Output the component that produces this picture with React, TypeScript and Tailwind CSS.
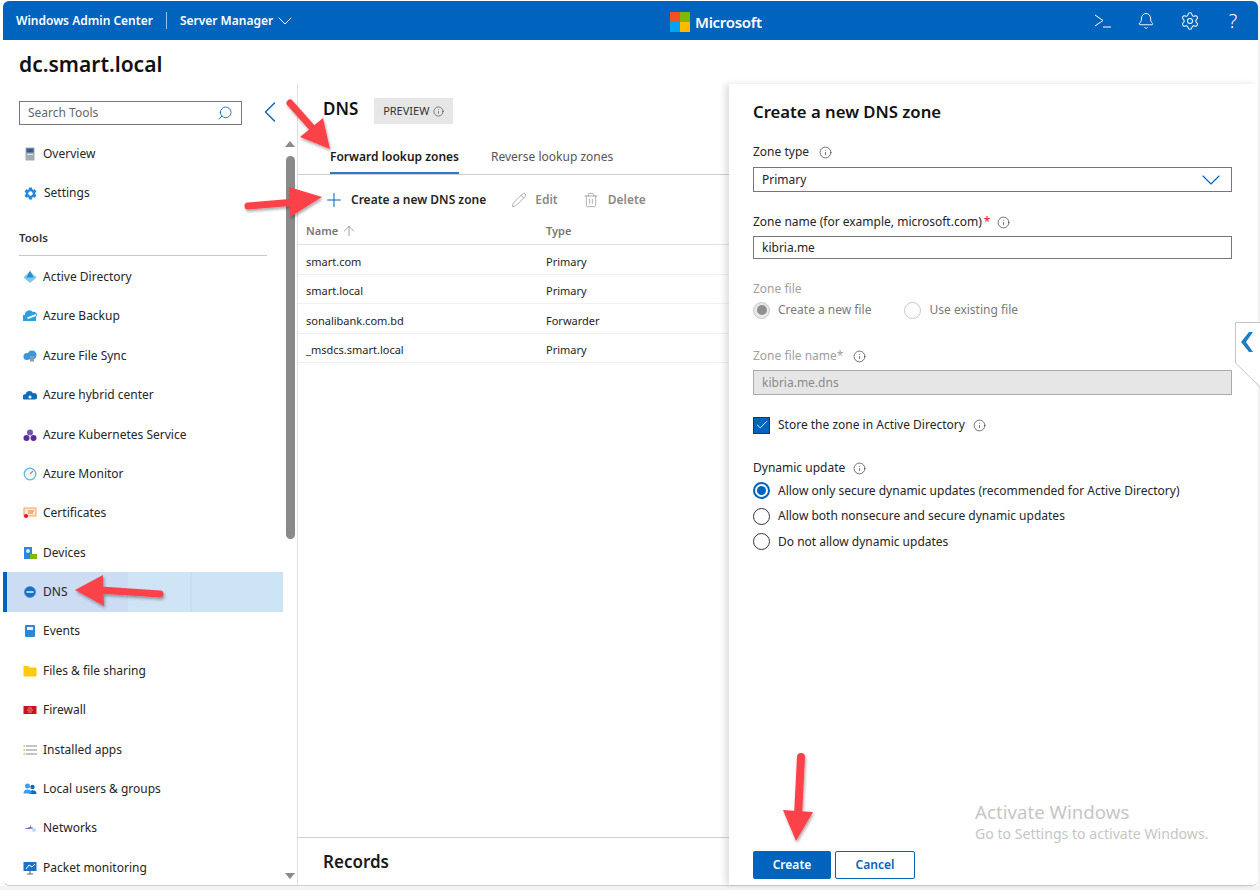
import { Bell, ChevronDown, ChevronLeft, Info, Pencil, Plus, Search, Settings, Trash2, ArrowUp, Check } from "lucide-react";
import { MdSettings } from "react-icons/md";

const font = "font-['Noto_Sans',sans-serif]";

function NavIcon({ name }: { name: string }) {
  switch (name) {
    case "Overview":
      return (
        <svg viewBox="0 0 14 14" className="w-3.5 h-3.5">
          <rect x="2.5" y="0.5" width="9" height="13" fill="#a3abb3" />
          <rect x="3.5" y="1.5" width="7" height="4" fill="#2f5f8f" />
          <rect x="4" y="7" width="6" height="1" fill="#e4e4e4" />
        </svg>
      );
    case "Settings":
      return <MdSettings size={15} className="text-[#1e88e5]" />;
    case "Active Directory":
      return (
        <svg viewBox="0 0 14 14" className="w-3.5 h-3.5">
          <path d="M7 1L0.5 7.5 7 13l6.5-5.5z" fill="#7cc7ea" />
          <path d="M7 1L3.5 7.5h7z" fill="#2b88d8" />
        </svg>
      );
    case "Azure Backup":
      return (
        <svg viewBox="0 0 14 14" className="w-3.5 h-3.5">
          <path d="M1 12a3 3 0 0 1 1-6 4.5 4.5 0 0 1 8-3 3 3 0 0 1 3 5v4z" fill="#2b9fe0" />
          <path d="M4 8.5l9-3.5v2l-8 3z" fill="#fff" />
        </svg>
      );
    case "Azure File Sync":
      return (
        <svg viewBox="0 0 14 14" className="w-3.5 h-3.5">
          <circle cx="4" cy="7.5" r="3.5" fill="#3a96dd" />
          <circle cx="9" cy="6" r="4.5" fill="#3a96dd" />
          <rect x="7" y="7" width="4" height="5.5" fill="#8a9aa8" />
        </svg>
      );
    case "Azure hybrid center":
      return (
        <svg viewBox="0 0 14 14" className="w-3.5 h-3.5">
          <path d="M1 11.5a2.8 2.8 0 0 1 1.5-5.3 4 4 0 0 1 7.5-1 3.2 3.2 0 0 1 2 6.3z" fill="#0f6cbd" />
          <circle cx="7" cy="9" r="1.5" fill="#fff" />
        </svg>
      );
    case "Azure Kubernetes Service":
      return (
        <svg viewBox="0 0 14 14" className="w-3.5 h-3.5">
          <circle cx="7" cy="4.5" r="3" fill="#7b4fb5" />
          <circle cx="3.5" cy="10" r="3" fill="#5c2d91" />
          <circle cx="10.5" cy="10" r="3" fill="#5c2d91" />
        </svg>
      );
    case "Azure Monitor":
      return (
        <svg viewBox="0 0 14 14" className="w-3.5 h-3.5">
          <circle cx="7" cy="7" r="5.8" fill="#eef7fc" stroke="#59b4d9" strokeWidth="1.2" />
          <path d="M7 7l3-3" stroke="#e8704a" strokeWidth="1.2" />
        </svg>
      );
    case "Certificates":
      return (
        <svg viewBox="0 0 14 14" className="w-3.5 h-3.5">
          <rect x="1" y="2" width="12" height="8" fill="#fde9d4" stroke="#f2a35e" />
          <path d="M5 5h6M5 7h5" stroke="#e8704a" />
          <circle cx="3" cy="10" r="2" fill="#e81123" />
        </svg>
      );
    case "Devices":
      return (
        <svg viewBox="0 0 14 14" className="w-3.5 h-3.5">
          <rect x="1" y="1" width="8" height="12" fill="#2b88d8" />
          <circle cx="5" cy="5" r="2" fill="#cfe8fa" />
          <rect x="7" y="8" width="7" height="5" fill="#7fba00" />
        </svg>
      );
    case "DNS":
      return (
        <svg viewBox="0 0 14 14" className="w-3.5 h-3.5">
          <circle cx="7" cy="7" r="5.8" fill="#1a73c7" />
          <rect x="3.5" y="6" width="7" height="2" fill="#a9d3f2" />
        </svg>
      );
    case "Events":
      return (
        <svg viewBox="0 0 14 14" className="w-3.5 h-3.5">
          <rect x="2" y="1" width="10" height="12" rx="1" fill="#2b88d8" />
          <rect x="4" y="3" width="6" height="3" fill="#e6f3fc" />
        </svg>
      );
    case "Files & file sharing":
      return (
        <svg viewBox="0 0 14 14" className="w-3.5 h-3.5">
          <path d="M0.5 2h5l1 1.5h7v9h-13z" fill="#ffc90e" />
        </svg>
      );
    case "Firewall":
      return (
        <svg viewBox="0 0 14 14" className="w-3.5 h-3.5">
          <rect x="0.5" y="3" width="13" height="8" fill="#c4161c" />
          <path d="M5 5h4M4 7h6M5 9h4" stroke="#e98a8d" />
        </svg>
      );
    case "Installed apps":
      return (
        <svg viewBox="0 0 14 14" className="w-3.5 h-3.5">
          <path d="M3 3h11M3 7h11M3 11h11" stroke="#8a8a8a" />
          <path d="M0.5 3h1.5M0.5 7h1.5M0.5 11h1.5" stroke="#7fba00" />
        </svg>
      );
    case "Local users & groups":
      return (
        <svg viewBox="0 0 14 14" className="w-3.5 h-3.5">
          <circle cx="9.5" cy="5" r="2.2" fill="#0f6cbd" />
          <path d="M6 12a3.5 3.5 0 0 1 7.5 0z" fill="#0f6cbd" />
          <circle cx="4.5" cy="4" r="2.5" fill="#3aa0e8" />
          <path d="M0.5 11.5a4 4 0 0 1 8 0z" fill="#3aa0e8" />
        </svg>
      );
    case "Networks":
      return (
        <svg viewBox="0 0 14 14" className="w-3.5 h-3.5">
          <path d="M1 8l6-2V3l1 3 3 1-4 1z" fill="#8661c5" />
          <circle cx="11" cy="9" r="2" fill="#b9d9f5" />
        </svg>
      );
    default:
      return (
        <svg viewBox="0 0 14 14" className="w-3.5 h-3.5">
          <rect x="0.5" y="1" width="13" height="9" fill="#1a73c7" />
          <path d="M3 8l3-4 3 2 3-3" stroke="#fff" fill="none" />
          <path d="M4 13h6M7 10v3" stroke="#5a6a7a" strokeWidth="1.2" />
        </svg>
      );
  }
}

function NavRow({ label, active }: { label: string; active?: boolean }) {
  return (
    <div
      className={`h-[39.4px] flex items-center gap-[6px] text-[12px] text-[#252525] ${
        active
          ? "border-l-4 border-[#0063bd] pl-[16px] bg-[linear-gradient(90deg,#cbdcf3_121px,#cfe4f4_121px,#cfe4f4_183px,#c6dff3_183px,#c6dff3_185px,#cde4f5_185px)]"
          : "pl-[20px]"
      }`}
    >
      <NavIcon name={label} />
      <span>{label}</span>
    </div>
  );
}

function Tip({ size = 13 }: { size?: number }) {
  return <Info size={size} strokeWidth={1.25} className="text-[#333] shrink-0" />;
}

function RadioDot({ checked, disabled }: { checked?: boolean; disabled?: boolean }) {
  if (disabled) {
    return (
      <span className={`w-[17px] h-[17px] rounded-full border border-[#c8c8c8] flex items-center justify-center ${checked ? "bg-[#e8e8e8]" : "bg-white"}`}>
        {checked && <span className="w-[10px] h-[10px] rounded-full bg-[#8f8f8f]" />}
      </span>
    );
  }
  return (
    <span className={`w-[17px] h-[17px] rounded-full flex items-center justify-center ${checked ? "border-2 border-[#0063bd]" : "border-[1.5px] border-[#333]"}`}>
      {checked && <span className="w-[9px] h-[9px] rounded-full bg-[#0063bd]" />}
    </span>
  );
}

const upperNav = ["Overview", "Settings"];
const toolNav = [
  "Active Directory",
  "Azure Backup",
  "Azure File Sync",
  "Azure hybrid center",
  "Azure Kubernetes Service",
  "Azure Monitor",
  "Certificates",
  "Devices",
  "DNS",
  "Events",
  "Files & file sharing",
  "Firewall",
  "Installed apps",
  "Local users & groups",
  "Networks",
  "Packet monitoring",
];

const zones = [
  ["smart.com", "Primary"],
  ["smart.local", "Primary"],
  ["sonalibank.com.bd", "Forwarder"],
  ["_msdcs.smart.local", "Primary"],
];

export default function App() {
  return (
    <div className={`${font} relative w-[1260px] h-[890px] bg-[#f3f3f3] overflow-hidden pb-1 pr-[2px]`}>
      <div className="h-full flex flex-col bg-white pl-[3px] pt-px">
        {/* header */}
        <div className="h-[39px] shrink-0 bg-[#0063bd] rounded-t-[6px] text-white flex items-center pl-[13px] relative">
          <span className="text-[12px] font-semibold">Windows Admin Center</span>
          <span className="w-px h-[17px] bg-[#9cc3e6] ml-[13px] mr-[13px]" />
          <span className="text-[12px] font-semibold">Server Manager</span>
          <ChevronDown size={24} strokeWidth={1} />
          <div className="flex-1" />
          <div className="flex items-center gap-[23.5px] pr-[15px]">
            <svg viewBox="0 0 18 18" className="w-5 h-[18px]" fill="none" stroke="white" strokeWidth="1">
              <path d="M1 3l8 5.5-8 5.5M9 15h8" />
            </svg>
            <span className="w-5 flex justify-center"><Bell size={18} strokeWidth={1.25} /></span>
            <Settings size={20} strokeWidth={1.25} />
            <span className="text-[20px] font-light leading-none w-5 text-center">?</span>
          </div>
          <div className="absolute left-[667px] top-[10px] flex items-center gap-[5px]">
            <div className="grid grid-cols-2 gap-0 w-[20px] h-[20px]">
              <span className="bg-[#f25022]" />
              <span className="bg-[#7fba00]" />
              <span className="bg-[#00a4ef]" />
              <span className="bg-[#ffb900]" />
            </div>
            <span className="text-[15px] font-semibold tracking-[-0.3px]">Microsoft</span>
          </div>
        </div>

        {/* server name */}
        <div className="h-[44px] shrink-0 flex items-center pl-[16px] pt-[5px] text-[21px] font-semibold text-[#111]">
          dc.smart.local
        </div>

        <div className="flex-1 flex min-h-0 border-b border-[#cfcfcf] rounded-b-[6px]">
          {/* sidebar */}
          <div className="w-[295px] shrink-0 flex flex-col border-r border-[#dedede]">
            <div className="h-[50px] shrink-0 flex items-start pt-[17px] pl-[16px]">
              <div className="w-[223px] h-[24px] border border-[#777] flex items-center justify-between px-2 text-[12px] text-[#666]">
                <span>Search Tools</span>
                <Search size={16} strokeWidth={1.25} className="text-[#0063bd] -scale-x-100" />
              </div>
              <ChevronLeft size={36} strokeWidth={0.9} className="text-[#0063bd] ml-[10px] mt-[-7px]" />
            </div>
            <div className="flex-1 flex min-h-0">
              <div className="w-[280px] shrink-0 overflow-hidden">
                {upperNav.map((label) => (
                  <NavRow key={label} label={label} />
                ))}
                <div className="mx-[16px] mt-[10px] h-[33px] border-b border-[#c8c8c8] flex items-start pt-[6px] text-[11.5px] font-semibold text-[#333]">
                  Tools
                </div>
                <div className="h-[1.5px]" />
                {toolNav.map((label) => (
                  <NavRow key={label} label={label} active={label === "DNS"} />
                ))}
              </div>
              <div className="flex-1 flex flex-col items-center pt-[7px]">
                <span className="w-0 h-0 border-x-[5px] border-x-transparent border-b-[6px] border-b-[#8a8a8a]" />
                <span className="w-[9px] h-[383px] rounded-full bg-[#8a8a8a] mt-[9px]" />
                <div className="flex-1" />
                <span className="w-0 h-0 border-x-[5px] border-x-transparent border-t-[6px] border-t-[#8a8a8a] mb-[6px]" />
              </div>
            </div>
          </div>

          {/* DNS list */}
          <div className="flex-1 min-w-0 flex flex-col text-[#252525]">
            <div className="h-[53px] shrink-0 flex items-start pl-[25px] pt-[12px]">
              <span className="text-[17px] font-semibold leading-[26px] text-[#111]">DNS</span>
              <span className="ml-[16px] mt-[2px] h-[26px] w-[79px] bg-[#e6e6e6] flex items-center justify-center gap-1 text-[11px] text-[#333]">
                PREVIEW <Info size={11} strokeWidth={1.25} />
              </span>
            </div>
            <div className="h-[38px] shrink-0 flex items-start gap-[32px] pl-[32px] border-b border-[#d0d0d0] text-[12px] pt-[11px]">
              <span className="font-semibold text-[#1a1a1a] h-[26px] border-b-2 border-[#2b7cc5]">Forward lookup zones</span>
              <span className="text-[#555]">Reverse lookup zones</span>
            </div>
            <div className="h-[47px] shrink-0 flex items-center pl-[25px] pt-[2px] text-[12px]">
              <Plus size={22} strokeWidth={1.1} className="text-[#0063bd] mr-[6px]" />
              <span className="font-semibold text-[#252525] mr-[25px]">Create a new DNS zone</span>
              <Pencil size={16} strokeWidth={1} className="text-[#8a8a8a] mr-[8px]" />
              <span className="text-[#8a8a8a] font-semibold mr-[25px]">Edit</span>
              <Trash2 size={16} strokeWidth={1} className="text-[#8a8a8a] mr-[9px]" />
              <span className="text-[#8a8a8a] font-semibold">Delete</span>
            </div>
            <div className="h-[23px] shrink-0 grid grid-cols-[240px_1fr] pl-[8px] pt-[1px] items-start border-b border-[#e3e3e3] text-[11px] font-semibold text-[#777]">
              <span className="flex items-center gap-[3px]">
                Name <ArrowUp size={16} strokeWidth={1} />
              </span>
              <span>Type</span>
            </div>
            {zones.map(([name, type]) => (
              <div key={name} className="h-[29.6px] shrink-0 grid grid-cols-[240px_1fr] pl-[8px] pt-[5px] items-center border-b border-[#f0f0f0] text-[11px]">
                <span>{name}</span>
                <span>{type}</span>
              </div>
            ))}
            <div className="flex-1" />
            <div className="h-[48px] shrink-0 border-t border-[#d0d0d0] pl-[25px] flex items-center text-[17px] font-semibold text-[#1a1a1a]">
              Records
            </div>
          </div>

          {/* create panel */}
          <div className="w-[529px] shrink-0 flex flex-col pl-[24px] pr-[26px] text-[12px] text-[#252525] shadow-[-4px_0_6px_rgba(0,0,0,0.12)] bg-white rounded-br-[6px] relative">
            <div className="text-[16.7px] font-semibold text-[#111] mt-[16px] h-[24px] leading-[24px]">Create a new DNS zone</div>

            <div className="flex items-center gap-[10px] mt-[18px] h-[20px]">
              Zone type <Tip />
            </div>
            <div className="mt-[5px] h-[25px] border border-[#777] flex items-center justify-between pl-2 pr-[4px]">
              <span>Primary</span>
              <ChevronDown size={32} strokeWidth={0.8} className="text-[#0063bd] -my-2" />
            </div>

            <div className="flex items-center mt-[20px] h-[20px]">
              Zone name (for example, microsoft.com)
              <span className="text-[#e81123] ml-[2px]">*</span>
              <span className="ml-[7px]"><Tip /></span>
            </div>
            <div className="mt-[4px] h-[23px] border border-[#777] flex items-center pl-2">kibria.me</div>

            <div className="text-[#a0a0a0] mt-[21px] h-[18px] flex items-center">Zone file</div>
            <div className="flex items-center text-[#7a7a7a] h-[24px]">
              <RadioDot checked disabled />
              <span className="ml-2">Create a new file</span>
              <span className="ml-[33px]"><RadioDot disabled /></span>
              <span className="ml-2">Use existing file</span>
            </div>

            <div className="text-[#a0a0a0] mt-[24px] h-[20px] flex items-center gap-[10px]">
              <span>Zone file name*</span> <Tip />
            </div>
            <div className="mt-[4px] h-[25px] border border-[#aaa] bg-[#e6e6e6] text-[#8a8a8a] flex items-center pl-2">kibria.me.dns</div>

            <div className="flex items-center mt-[20px] h-[20px]">
              <span className="w-[17px] h-[17px] bg-[#0063bd] border border-[#333] flex items-center justify-center">
                <Check size={14} strokeWidth={1.5} className="text-white" />
              </span>
              <span className="ml-2">Store the zone in Active Directory</span>
              <span className="ml-2"><Tip /></span>
            </div>

            <div className="flex items-center gap-2 mt-[23px] h-[20px]">
              Dynamic update <Tip />
            </div>
            <div className="flex items-center gap-2 h-[25.5px]">
              <RadioDot checked /> Allow only secure dynamic updates (recommended for Active Directory)
            </div>
            <div className="flex items-center gap-2 h-[25.5px]">
              <RadioDot /> Allow both nonsecure and secure dynamic updates
            </div>
            <div className="flex items-center gap-2 h-[25.5px]">
              <RadioDot /> Do not allow dynamic updates
            </div>

            <div className="flex-1" />
            <div className="flex gap-[4px] pb-[6px] text-[12px] font-semibold">
              <button className="w-[78px] h-[28px] rounded-[2px] bg-[#0063bd] text-white">Create</button>
              <button className="w-[80px] h-[28px] rounded-[2px] border border-[#0063bd] text-[#0063bd] bg-white">Cancel</button>
            </div>

            <div className="absolute left-[246px] bottom-[41px] text-[#c6c6c6]">
              <div className="text-[18.7px] leading-[24px]">Activate Windows</div>
              <div className="text-[14.1px] leading-[20px]">Go to Settings to activate Windows.</div>
            </div>
          </div>
        </div>
      </div>

      {/* expand tab on the panel edge */}
      <svg viewBox="0 0 26 68" className="absolute left-[1235px] top-[322px] w-[26px] h-[68px]">
        <path d="M0.5 0.5H26V66L0.5 41z" fill="#fff" stroke="#c4c4c4" />
        <path d="M14 10L6 20l8 10h4l-7-10 7-10z" fill="#1b7fc4" />
      </svg>

      {/* annotation arrows */}
      <svg viewBox="0 0 1260 890" className="absolute inset-0 w-[1260px] h-[890px] pointer-events-none">
        <defs>
          <filter id="arrowShadow" x="-30%" y="-30%" width="160%" height="160%">
            <feDropShadow dx="1" dy="2" stdDeviation="1.5" floodColor="#000" floodOpacity="0.35" />
          </filter>
        </defs>
        <g filter="url(#arrowShadow)" fill="#fb424a" stroke="#fb424a" strokeLinecap="round">
          <path d="M290 103L314 130" strokeWidth="7" />
          <path d="M323 118L300 137L330 149z" stroke="none" />
          <path d="M248 206L296 202" strokeWidth="7" />
          <path d="M289 187L290 217L322 197z" stroke="none" />
          <path d="M160 594L100 590" strokeWidth="7" />
          <path d="M103 575L104 606L75 590z" stroke="none" />
          <path d="M801 757L798 816" strokeWidth="8" />
          <path d="M783 810L813 812L796 841z" stroke="none" />
        </g>
      </svg>
    </div>
  );
}
